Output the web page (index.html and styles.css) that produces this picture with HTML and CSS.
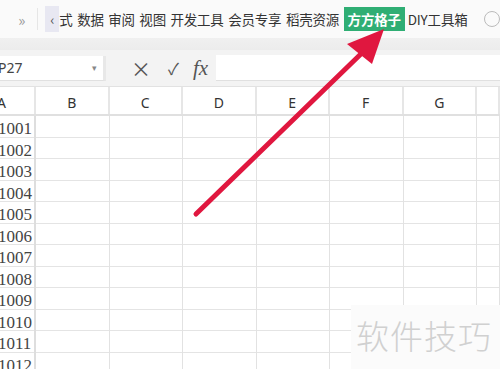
FILE: index.html
```html
<!DOCTYPE html>
<html lang="zh">
<head>
  <meta charset="UTF-8" />
  <title>表格</title>
  <link rel="stylesheet" href="styles.css">
</head>
<body>
  <div class="app">
    <div class="tabs">
      <span class="more">»</span>
      <span class="sep"></span>
      <span class="back">‹</span>
      <span class="tab">式</span>
      <span class="tab">数据</span>
      <span class="tab">审阅</span>
      <span class="tab">视图</span>
      <span class="tab">开发工具</span>
      <span class="tab">会员专享</span>
      <span class="tab">稻壳资源</span>
      <span class="tab active">方方格子</span>
      <span class="tab">DIY工具箱</span>
      <span class="search"></span>
    </div>
    <div class="band"></div>

    <div class="formula">
      <div class="namebox">P27<span class="drop">▾</span></div>
      <div class="tools">
        <span class="icon">×</span>
        <span class="icon check">✓</span>
        <span class="icon fx">fx</span>
      </div>
      <div class="input"></div>
    </div>

    <div class="sheet">
      <div class="corner">A</div>
      <div class="colhead">B</div>
      <div class="colhead">C</div>
      <div class="colhead">D</div>
      <div class="colhead">E</div>
      <div class="colhead">F</div>
      <div class="colhead">G</div>
      <div class="colhead"></div>
    </div>
    <div class="rows" id="rows"></div>

    <svg class="arrow" width="500" height="369" viewBox="0 0 500 369">
      <line x1="196" y1="214" x2="365" y2="50" stroke="#e0173f" stroke-width="5" stroke-linecap="round"/>
      <polygon points="384,29 347,44 372,64" fill="#e0173f"/>
    </svg>

    <div class="mark">软件技巧</div>
  </div>

  <script>
    const rows = document.getElementById("rows");
    for (let n = 1001; n <= 1012; n++) {
      let html = '<div class="num">' + n + '</div>';
      for (let c = 0; c < 7; c++) html += '<div class="cell"></div>';
      rows.innerHTML += '<div class="row">' + html + '</div>';
    }
  </script>
</body>
</html>
```

FILE: styles.css
```css
body {
  margin: 0;
  font-family: "Noto Sans CJK SC", "Noto Sans", sans-serif;
  background: #fff;
}
.app {
  position: relative;
  width: 500px;
  height: 369px;
  overflow: hidden;
}
.tabs {
  height: 38px;
  display: flex;
  align-items: center;
  background: #fafafa;
  color: #333;
  font-size: 13.5px;
  white-space: nowrap;
}
.more {
  width: 36px;
  text-align: center;
  color: #999;
  font-size: 15px;
  margin-left: 6px;
}
.sep {
  width: 1px;
  height: 22px;
  background: #e6e6e6;
  margin-right: 7px;
}
.back {
  width: 16px;
  height: 26px;
  line-height: 26px;
  background: #e8e8f2;
  color: #555;
  text-align: center;
  font-size: 14px;
}
.tab {
  margin-right: 4.5px;
  letter-spacing: -0.2px;
}
.tab.active {
  background: #2fae74;
  color: #fff;
  font-weight: bold;
  padding: 2px 4px;
  margin-right: 3px;
}
.search {
  width: 14px;
  height: 14px;
  border: 1.5px solid #bbb;
  border-radius: 50%;
  margin-left: 12px;
  flex: none;
}
.band {
  height: 12px;
  background: linear-gradient(#f0f0f0, #ececec);
}
.formula {
  height: 36px;
  display: flex;
  align-items: center;
  background: #f3f3f3;
  border-bottom: 1px solid #e2e2e2;
}
.namebox {
  width: 108px;
  height: 25px;
  background: #fff;
  border-bottom: 1px solid #e0e0e0;
  display: flex;
  align-items: center;
  justify-content: space-between;
  margin-left: -2px;
  font-family: "Noto Sans", sans-serif;
  font-size: 14px;
  color: #444;
  box-sizing: border-box;
  border-right: 3px solid #e8e8e8;
}
.drop {
  font-size: 9px;
  color: #888;
  margin-right: 6px;
}
.tools {
  width: 110px;
  display: flex;
  align-items: center;
  color: #555;
}
.icon {
  font-size: 20px;
  margin-left: 25px;
}
.icon.check {
  font-size: 16px;
  margin-left: 17px;
}
.icon.fx {
  font-family: "Liberation Serif", serif;
  font-style: italic;
  font-size: 21px;
  margin-left: 14px;
}
.input {
  flex: 1;
  height: 25px;
  background: #fff;
  border-bottom: 1px solid #e0e0e0;
}
.sheet {
  display: grid;
  grid-template-columns: 36px repeat(6, 73.5px) 23px;
  height: 29px;
  border-bottom: 2px solid #e0e0e0;
  box-sizing: border-box;
}
.corner, .colhead {
  display: flex;
  align-items: center;
  justify-content: center;
  font-family: "Noto Sans", sans-serif;
  font-size: 14px;
  color: #333;
  border-right: 2px solid #e6e6e6;
  padding-top: 4px;
}
.corner {
  justify-content: flex-start;
  margin-left: -3px;
}
.rows {
  display: flex;
  flex-direction: column;
}
.row {
  display: grid;
  grid-template-columns: 36px repeat(6, 73.5px) 23px;
  height: 21.5px;
  border-bottom: 1.5px solid #e4e4e4;
  box-sizing: border-box;
}
.num {
  font-family: "Liberation Serif", serif;
  font-size: 17px;
  color: #444;
  line-height: 21px;
  padding-top: 2px;
  border-right: 2px solid #dedede;
  margin-left: -2px;
}
.cell {
  border-right: 1.5px solid #e2e2e2;
}
.arrow {
  position: absolute;
  left: 0;
  top: 0;
}
.mark {
  position: absolute;
  left: 351px;
  top: 305px;
  width: 149px;
  height: 64px;
  background: #fbfbfb;
  color: #d0d0d0;
  font-size: 33px;
  font-weight: 300;
  padding-left: 5px;
  padding-top: 6px;
  box-sizing: border-box;
  letter-spacing: 1px;
}
```
